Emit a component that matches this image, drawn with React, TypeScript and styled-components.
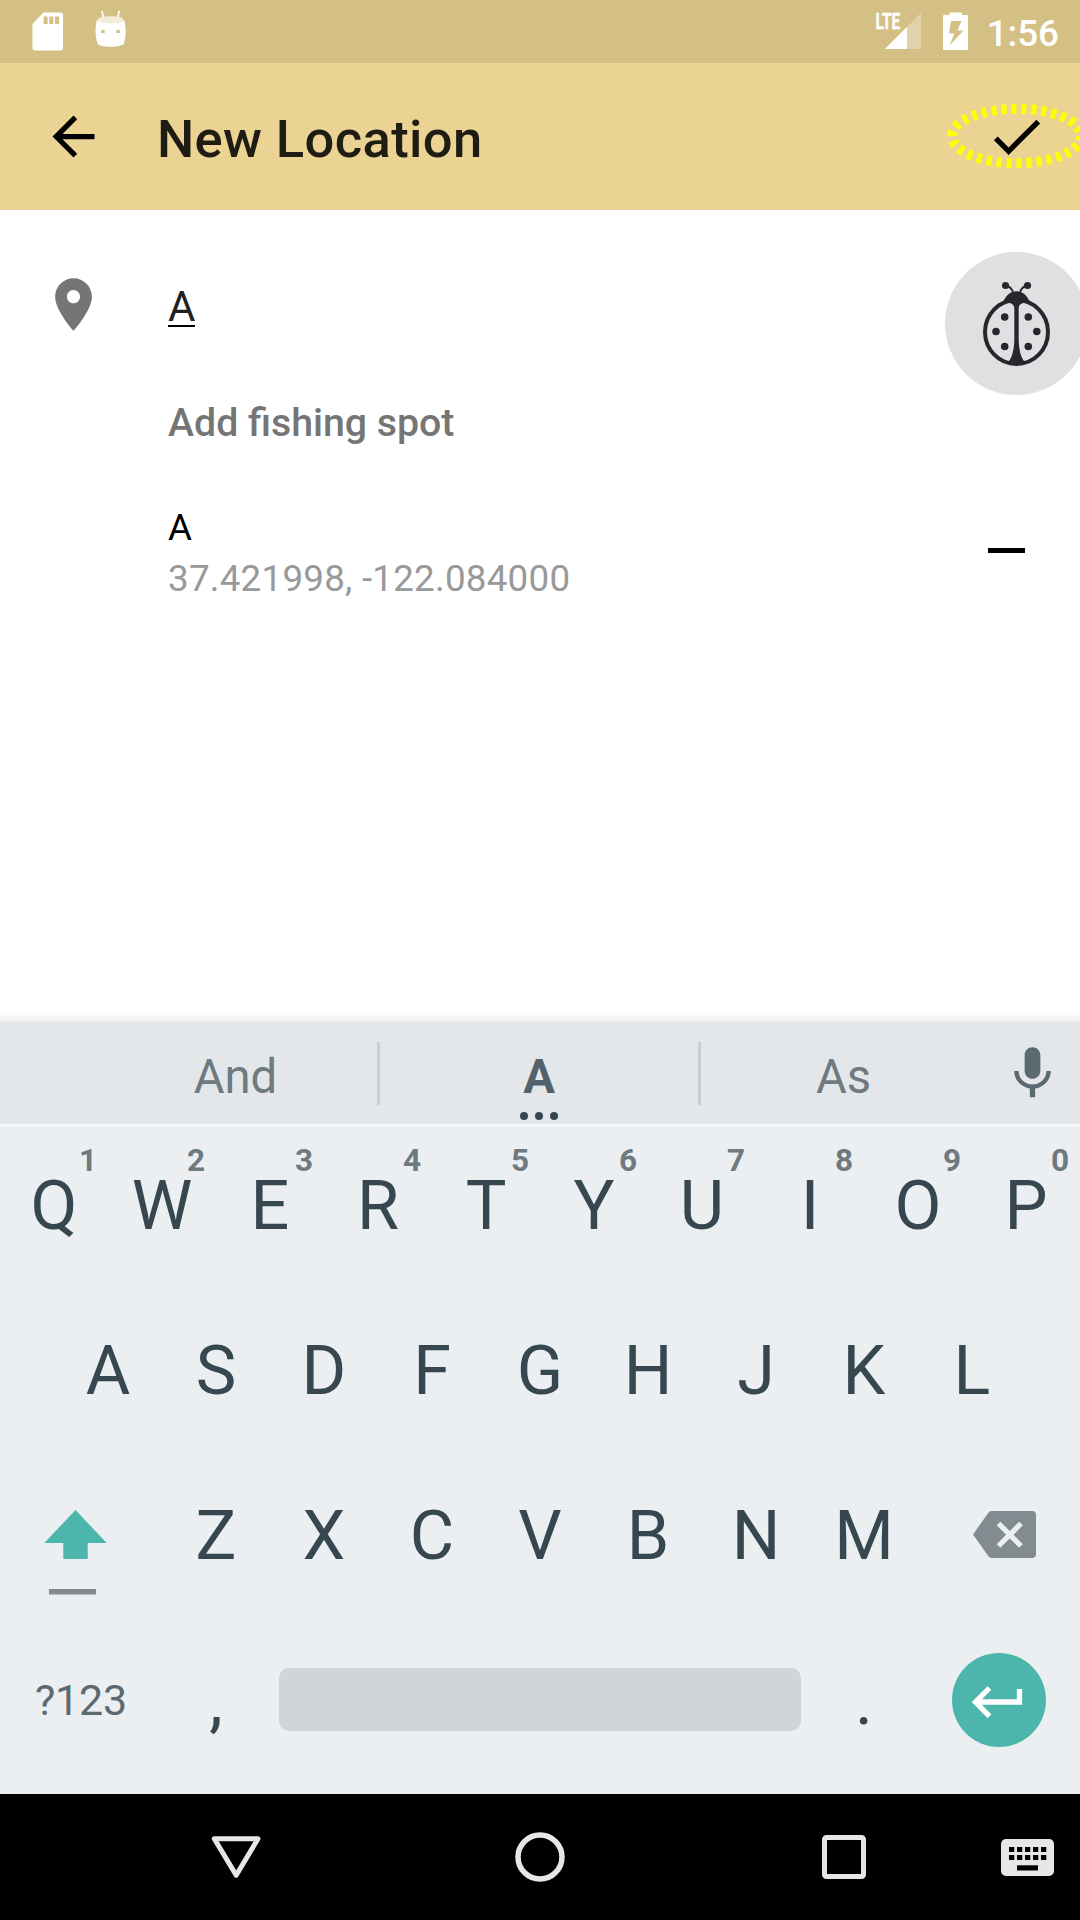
import React from "react";
import styled, { createGlobalStyle } from "styled-components";

const GlobalStyle = createGlobalStyle`
  * { box-sizing: border-box; }
  html, body { margin: 0; padding: 0; overflow: hidden; }
  body { font-family: Roboto, "Noto Sans", sans-serif; background: #fff; }
  svg { display: block; flex: none; }
`;

const Screen = styled.div`
  position: relative;
  width: 1080px;
  height: 1920px;
  display: flex;
  flex-direction: column;
  overflow: hidden;
  background: #fff;
`;

const StatusBar = styled.header`
  height: 63px;
  flex: none;
  display: flex;
  justify-content: space-between;
  background: #d4c084;
  padding: 0 21px 0 25px;
  color: #fff;
`;

const StatusGroup = styled.div<{ $gap: number }>`
  display: flex;
  align-items: center;
  gap: ${(p) => p.$gap}px;
`;

const Clock = styled.span`
  font-size: 36.75px;
  font-weight: 500;
  line-height: 44px;
  padding-top: 4px;
  margin-left: -1px;
`;

const AppBar = styled.div`
  height: 147px;
  flex: none;
  display: flex;
  align-items: center;
  background: #ebd393;
  padding: 0 32px 0 42px;
`;

const Title = styled.h1`
  flex: 1;
  margin: 0;
  padding: 4px 0 0 52px;
  font-size: 52.5px;
  font-weight: 500;
  line-height: 62px;
  letter-spacing: 0.37px;
  color: #1f1c14;
`;

const Form = styled.main`
  flex: none;
  height: 812px;
  display: flex;
  flex-direction: column;
  padding: 63px 42px 0;
  background: linear-gradient(#fff 0 801px, #fcfcfc 803px, #f7f7f7 807px, #ededed 812px);
`;

const NameRow = styled.div`
  height: 63px;
  display: flex;
  gap: 63px;
`;

const NameInput = styled.div`
  padding-top: 9px;
  height: 54px;
  font-size: 42px;
  line-height: 50px;
  color: #212121;
  span {
    display: block;
    height: 45px;
    border-bottom: 2px solid #000;
  }
`;

const AddSpot = styled.div`
  margin: 64px 0 0 126px;
  font-size: 39.25px;
  font-weight: 500;
  line-height: 46px;
  color: #757575;
`;

const SpotRow = styled.div`
  margin: 60px 0 0 126px;
  display: flex;
  justify-content: space-between;
  align-items: center;
`;

const SpotText = styled.div`
  display: flex;
  flex-direction: column;
  gap: 7px;
`;

const SpotLine = styled.span<{ $color: string }>`
  font-size: 36.75px;
  line-height: 44px;
  letter-spacing: 0.24px;
  color: ${(p) => p.$color};
`;

const RemoveIcon = styled.button`
  width: 37px;
  height: 5px;
  margin: 0 13px 7px 0;
  padding: 0;
  border: 0;
  background: #000;
`;

const DebugButton = styled.div`
  position: absolute;
  left: 945px;
  top: 252px;
  width: 143px;
  height: 143px;
  border-radius: 50%;
  background: #dfe0e2;
`;

const Highlight = styled.svg`
  position: absolute;
  left: 940px;
  top: 96px;
`;

const Suggestions = styled.div`
  height: 105px;
  flex: none;
  display: grid;
  grid-template-columns: 94px 283px 3px 318px 3px 285px 94px;
  background: #e3e7ea;
  border-bottom: 3px solid #f6f8f9;
`;

const Suggestion = styled.div<{ $primary?: boolean }>`
  position: relative;
  display: flex;
  justify-content: center;
  padding-top: 27px;
  font-size: 47.25px;
  line-height: 56px;
  font-weight: ${(p) => (p.$primary ? 700 : 400)};
  color: ${(p) => (p.$primary ? "#53626a" : "#6e7a80")};
`;

const MoreDots = styled.div`
  position: absolute;
  bottom: 4px;
  left: 50%;
  transform: translateX(-50%);
  display: flex;
  gap: 7px;
  i {
    width: 8px;
    height: 8px;
    border-radius: 50%;
    background: #37474f;
  }
`;

const Divider = styled.div`
  margin: 20px 0 19px;
  background: #c9ced1;
`;

const MicSlot = styled.div`
  display: flex;
  justify-content: center;
  padding: 20px 2px 0 0;
`;

const Keyboard = styled.div`
  height: 667px;
  flex: none;
  background: #ebeff2;
`;

const KeyRow = styled.div<{ $inset?: number }>`
  height: 165px;
  display: flex;
  padding: 0 ${(p) => p.$inset ?? 0}px;
`;

const Key = styled.div<{ $width?: number }>`
  position: relative;
  width: ${(p) => p.$width ?? 108}px;
  flex: none;
  display: flex;
  align-items: center;
  justify-content: center;
  padding-bottom: 8px;
  font-size: 68.25px;
  line-height: 80px;
  color: #37474f;
`;

const Hint = styled.span`
  position: absolute;
  right: 11px;
  top: 17px;
  font-size: 31.5px;
  line-height: 34px;
  font-weight: 700;
  color: #6e7a80;
`;

const SymbolKey = styled(Key)`
  font-size: 43px;
  letter-spacing: -0.15px;
  color: #5b6a71;
  padding: 0 0 9px;
`;

const SpaceBar = styled.div`
  width: 522px;
  height: 63px;
  margin: 46px 9px 0;
  border-radius: 10px;
  background: #d0d5d8;
`;

const EnterKey = styled.div`
  width: 94px;
  height: 94px;
  margin: 31px 0 0 34px;
  border-radius: 50%;
  background: #4db6ac;
`;

const NavBar = styled.nav`
  height: 126px;
  flex: none;
  display: grid;
  grid-template-columns: 84px 304px 304px 304px 63px;
  align-items: center;
  justify-items: center;
  background: #000;
`;

const SdCard = () => (
  <svg width="46" height="63" viewBox="25 0 46 63" fill="#fff">
    <path
      fillRule="evenodd"
      d="M43.5 12.5H60a3 3 0 0 1 3 3V47.500a3 3 0 0 1-3 3H35.400a3 3 0 0 1-3-3V24zM43.600 16.500v7.500h4v-7.500zM49.300 16.500v7.500h4v-7.500zM55 16.500v7.500h4v-7.500z"
    />
  </svg>
);

const AndroidHead = () => (
  <svg width="36" height="63" viewBox="93 0 36 63">
    <path d="M102 11.500l1.500 6.500M119.200 11.500l-1.500 6.500" stroke="#fff" strokeWidth="1.700" strokeLinecap="round" />
    <path
      fill="#fff"
      fillRule="evenodd"
      d="M97 20C101 24 120 24 124 20C126.300 26 126.200 36 124 43.500C123 46 116 46.700 110.500 46.700S98.500 46 97.500 43.500C95 36 95 26 97 20zM101.200 30h3.500v3h-3.500zM116.400 30h3.500v3h-3.500z"
    />
    <ellipse cx="110.500" cy="19.700" rx="13" ry="3.500" fill="#f2ecdb" />
  </svg>
);

const Signal = () => (
  <svg width="48" height="63" viewBox="875 0 48 63">
    <path d="M921 13v36H885z" fill="#fff" fillOpacity=".3" />
    <path d="M907 27v22H885z" fill="#fff" />
    <text
      x="875.500"
      y="29"
      fill="#fff"
      stroke="#fff"
      strokeWidth=".5"
      fontSize="22"
      fontWeight="700"
      textLength="24.500"
      lengthAdjust="spacingAndGlyphs"
    >
      LTE
    </text>
  </svg>
);

const Battery = () => (
  <svg width="25" height="63" viewBox="943 0 25 63" fill="#fff">
    <path
      fillRule="evenodd"
      d="M949.500 15v-1.500q0-1 1-1h10.500q1 0 1 1V15h5q1 0 1 1V49q0 1-1 1H944q-1 0-1-1V16q0-1 1-1zM951 21l-2 12.500h5.500L949.500 45.500L963.500 30.500h-6L961.500 21z"
    />
  </svg>
);

const Ladybug = () => (
  <svg width="143" height="143" viewBox="945 252 143 143">
    <ellipse cx="1016.500" cy="332" rx="31.500" ry="32" fill="none" stroke="#25272b" strokeWidth="4" />
    <g fill="#25272b">
      <path d="M1003 302.500C1006 295 1011 291.300 1016.500 291.300S1027 295 1030 302.500C1023 302.500 1019 303.500 1018.700 308V340C1019 350 1021 358 1024.500 361.500C1022 366 1011 366 1008.500 361.500C1012 358 1014 350 1014.300 340V308C1014 303.500 1010 302.500 1003 302.500z" />
      <circle cx="1005.500" cy="285.500" r="3.600" />
      <circle cx="1027.500" cy="285.500" r="3.600" />
      <circle cx="1004.700" cy="317" r="3.800" />
      <circle cx="1028.300" cy="317" r="3.800" />
      <circle cx="996" cy="331.500" r="3.800" />
      <circle cx="1036.800" cy="331.500" r="3.800" />
      <circle cx="1004.700" cy="346.500" r="3.800" />
      <circle cx="1028.300" cy="346.500" r="3.800" />
    </g>
    <path
      d="M1007 286Q1011 287 1013 292M1026 286Q1022 287 1020 292"
      fill="none"
      stroke="#25272b"
      strokeWidth="2"
    />
  </svg>
);

const MaterialIcon = ({ d, color = "#000" }: { d: string; color?: string }) => (
  <svg width="63" height="63" viewBox="0 0 24 24" fill={color}>
    <path d={d} />
  </svg>
);

const ShiftIcon = () => (
  <svg width="162" height="165" viewBox="0 1457 162 165">
    <path d="M75.500 1510L106.700 1543H87.700V1559H63.300V1543H44.300z" fill="#4db6ac" />
    <rect x="49" y="1589" width="47" height="5.500" fill="#828b90" />
  </svg>
);

const BackspaceIcon = () => (
  <svg width="162" height="165" viewBox="918 1457 162 165">
    <path
      d="M991.500 1511H1032q4 0 4 4V1554q0 4-4 4H991.500q-2 0-3.300-2L973 1534.500L988.200 1513q1.300-2 3.300-2z"
      fill="#828c90"
    />
    <path d="M998.500 1523.500L1021 1546M1021 1523.500L998.500 1546" stroke="#ebeff2" strokeWidth="5.300" />
  </svg>
);

const EnterIcon = () => (
  <svg width="94" height="94" viewBox="952 1653 94 94" fill="none" stroke="#fff" strokeWidth="5.300">
    <path d="M1019.500 1689V1702H976M989.500 1688L975.500 1702L989.500 1716.300" />
  </svg>
);

const topRow = ["Q", "W", "E", "R", "T", "Y", "U", "I", "O", "P"];
const homeRow = ["A", "S", "D", "F", "G", "H", "J", "K", "L"];
const bottomRow = ["Z", "X", "C", "V", "B", "N", "M"];

export default function App() {
  return (
    <>
      <GlobalStyle />
      <Screen>
        <StatusBar>
          <StatusGroup $gap={22}>
            <SdCard />
            <AndroidHead />
          </StatusGroup>
          <StatusGroup $gap={20}>
            <Signal />
            <Battery />
            <Clock>1:56</Clock>
          </StatusGroup>
        </StatusBar>

        <AppBar>
          <MaterialIcon d="M20 11H7.830l5.590-5.590L12 4l-8 8 8 8 1.410-1.410L7.830 13H20v-2z" />
          <Title>New Location</Title>
          <MaterialIcon d="M9 16.170L4.830 12l-1.420 1.410L9 19 21 7l-1.410-1.410z" />
        </AppBar>

        <Form>
          <NameRow>
            <MaterialIcon
              color="#757575"
              d="M12 2C8.130 2 5 5.130 5 9c0 5.250 7 13 7 13s7-7.750 7-13c0-3.870-3.130-7-7-7zm0 9.500c-1.380 0-2.500-1.120-2.500-2.500s1.120-2.500 2.500-2.500 2.500 1.120 2.500 2.500-1.120 2.500-2.500 2.500z"
            />
            <NameInput>
              <span>A</span>
            </NameInput>
          </NameRow>
          <AddSpot>Add fishing spot</AddSpot>
          <SpotRow>
            <SpotText>
              <SpotLine $color="#000">A</SpotLine>
              <SpotLine $color="#999">37.421998, -122.084000</SpotLine>
            </SpotText>
            <RemoveIcon aria-label="Remove" />
          </SpotRow>
        </Form>

        <Suggestions>
          <span />
          <Suggestion>And</Suggestion>
          <Divider />
          <Suggestion $primary>
            A
            <MoreDots>
              <i />
              <i />
              <i />
            </MoreDots>
          </Suggestion>
          <Divider />
          <Suggestion>As</Suggestion>
          <MicSlot>
            <MaterialIcon
              color="#5b6a71"
              d="M12 14c1.660 0 2.990-1.340 2.990-3L15 5c0-1.660-1.340-3-3-3S9 3.340 9 5v6c0 1.660 1.340 3 3 3zm5.300-3c0 3-2.540 5.100-5.300 5.100S6.700 14 6.700 11H5c0 3.410 2.720 6.230 6 6.720V21h2v-3.280c3.280-.480 6-3.300 6-6.720h-1.700z"
            />
          </MicSlot>
        </Suggestions>

        <Keyboard>
          <KeyRow>
            {topRow.map((k, i) => (
              <Key key={k}>
                {k}
                <Hint>{(i + 1) % 10}</Hint>
              </Key>
            ))}
          </KeyRow>
          <KeyRow $inset={54}>
            {homeRow.map((k) => (
              <Key key={k}>{k}</Key>
            ))}
          </KeyRow>
          <KeyRow>
            <ShiftIcon />
            {bottomRow.map((k) => (
              <Key key={k}>{k}</Key>
            ))}
            <BackspaceIcon />
          </KeyRow>
          <KeyRow>
            <SymbolKey $width={162}>?123</SymbolKey>
            <Key>,</Key>
            <SpaceBar />
            <Key>.</Key>
            <EnterKey>
              <EnterIcon />
            </EnterKey>
          </KeyRow>
        </Keyboard>

        <NavBar>
          <span />
          <svg width="50" height="50" viewBox="211 1832 50 50" fill="none" stroke="#e6e6e6" strokeWidth="5" strokeLinejoin="round">
            <path d="M214.300 1838.700H258L236.200 1875.300z" />
          </svg>
          <svg width="50" height="50" viewBox="0 0 50 50" fill="none" stroke="#e6e6e6" strokeWidth="5.500">
            <circle cx="25" cy="25" r="22" />
          </svg>
          <svg width="44" height="44" viewBox="0 0 44 44" fill="none" stroke="#e6e6e6" strokeWidth="5">
            <rect x="2.500" y="2.500" width="39" height="39" rx="2" />
          </svg>
          <svg width="53" height="37" viewBox="0 0 53 37">
            <rect width="53" height="37" rx="5" fill="#e6e6e6" />
            {[0, 1, 2, 3, 4].map((c) => (
              <g key={c}>
                <rect x={8 + c * 8} y="8" width="5.300" height="5" />
                <rect x={8 + c * 8} y="16" width="5.300" height="5" />
              </g>
            ))}
            <rect x="16" y="26.300" width="21" height="5.200" />
          </svg>
        </NavBar>

        <DebugButton>
          <Ladybug />
        </DebugButton>
        <Highlight width="160" height="80" viewBox="940 96 160 80" fill="none">
          <ellipse cx="1016.500" cy="136" rx="64.500" ry="27.200" stroke="#ff0" strokeWidth="10" pathLength="300" strokeDasharray="5 5" />
        </Highlight>
      </Screen>
    </>
  );
}
